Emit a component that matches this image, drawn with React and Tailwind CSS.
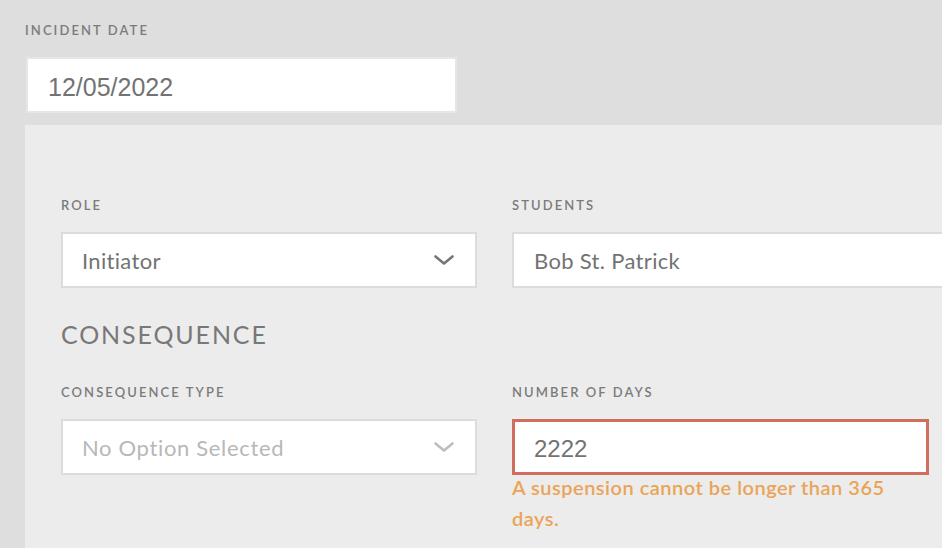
import React from "react";

const Chevron = ({ className }) => (
  <svg className={className} width="20" height="10" viewBox="0 0 20 10" fill="none">
    <path d="M1.5 1.5 L10 8.5 L18.5 1.5" stroke="currentColor" strokeWidth="2.6" strokeLinecap="round" strokeLinejoin="round" />
  </svg>
);

const Label = ({ children }) => (
  <p className="text-[13px] leading-4 font-semibold tracking-[0.16em] text-[#7b7b7b] uppercase">{children}</p>
);

export default function App() {
  return (
    <div className="w-[942px] h-[548px] overflow-hidden bg-[#dedede] flex flex-col font-['Lato',sans-serif]">
      {/* Incident date */}
      <div className="pl-[25px] pt-[22px]">
        <Label>Incident Date</Label>
        <div className="mt-[19px] ml-px w-[431px] h-[56px] bg-white border-2 border-[#e6e6e6] flex items-center pl-[20px] pt-[5px]">
          <span className="text-[25px] text-[#737373] font-['Liberation_Sans',sans-serif]">12/05/2022</span>
        </div>
      </div>

      {/* Details panel */}
      <div className="mt-[12px] ml-[25px] flex-1 bg-[#ececec] pl-[36px] pt-[72px]">
        <div className="flex gap-[35px]">
          <div className="w-[416px] shrink-0">
            <Label>Role</Label>
            <div className="mt-[19px] h-[56px] bg-white border-2 border-[#dcdcdc] flex items-center justify-between pl-[19px] pr-[21px]">
              <span className="text-[22px] tracking-[0.015em] text-[#737373]">Initiator</span>
              <Chevron className="text-[#767676]" />
            </div>
          </div>
          <div className="w-[460px] shrink-0">
            <Label>Students</Label>
            <div className="mt-[19px] h-[56px] bg-white border-2 border-[#dcdcdc] flex items-center pl-[20px]">
              <span className="text-[22px] tracking-[0.015em] text-[#737373]">Bob St. Patrick</span>
            </div>
          </div>
        </div>

        <h2 className="mt-[31px] text-[25px] leading-[30px] tracking-[0.075em] text-[#787878] font-normal uppercase">
          Consequence
        </h2>

        <div className="mt-[35px] flex gap-[35px]">
          <div className="w-[416px] shrink-0">
            <Label>Consequence Type</Label>
            <div className="mt-[19px] h-[56px] bg-white border-2 border-[#dcdcdc] flex items-center justify-between pl-[19px] pr-[21px]">
              <span className="text-[22px] tracking-[0.03em] text-[#b8b8b8]">No Option Selected</span>
              <Chevron className="text-[#bdbdbd]" />
            </div>
          </div>
          <div className="w-[417px] shrink-0">
            <Label>Number of Days</Label>
            <div className="mt-[19px] h-[56px] bg-white border-[3px] border-[#cf6e5c] flex items-center pl-[19px] pt-[3px]">
              <span className="text-[24px] text-[#737373] font-['Liberation_Sans',sans-serif]">2222</span>
            </div>
            <p className="-mt-[3px] max-w-[400px] text-[20px] leading-[31px] font-semibold tracking-[0.025em] text-[#eaa458]">
              A suspension cannot be longer than 365 days.
            </p>
          </div>
        </div>
      </div>
    </div>
  );
}
